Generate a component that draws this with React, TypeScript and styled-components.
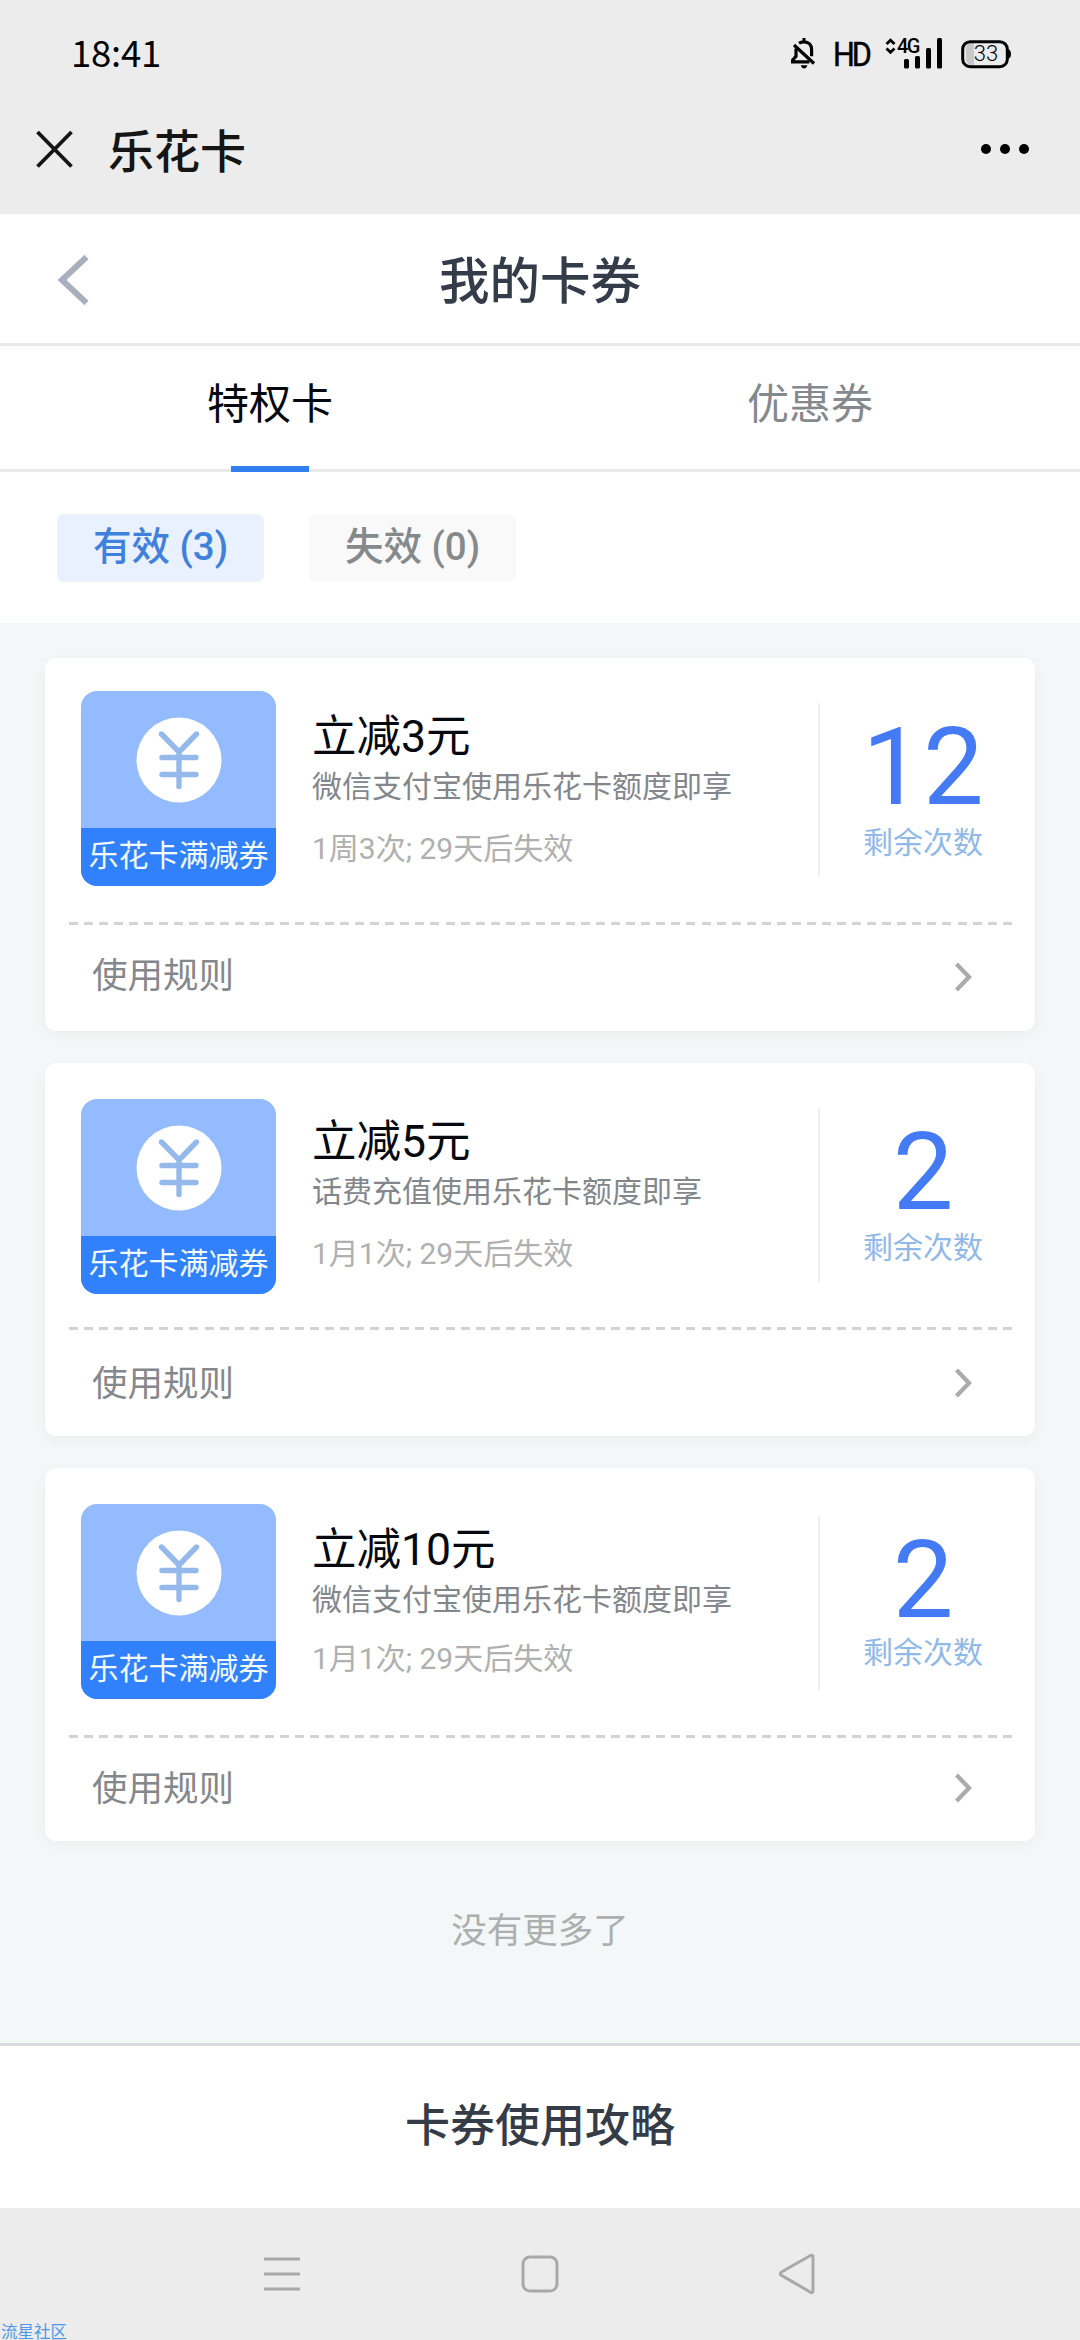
import React from "react";
import styled, { createGlobalStyle } from "styled-components";

const GlobalStyle = createGlobalStyle`
  * { box-sizing: border-box; }
  html, body { margin: 0; padding: 0; }
  body { font-family: Roboto, "Noto Sans CJK SC", sans-serif; background: #ececec; }
`;

const Screen = styled.div`
  position: relative;
  display: flex;
  flex-direction: column;
  width: 1080px;
  height: 2340px;
  overflow: hidden;
  background: #f4f7f7;
`;

const StatusBar = styled.header`
  display: flex;
  align-items: center;
  height: 108px;
  padding: 0 68px 0 71px;
  background: #ececec;
  color: #000;
`;

const Clock = styled.span`
  flex: 1;
  padding-bottom: 5px;
  font-family: "Noto Sans CJK SC", sans-serif;
  font-size: 36.5px;
  line-height: 50px;
  letter-spacing: -0.2px;
`;

const HdLabel = styled.span`
  width: 38px;
  margin: 0 14px 0 16px;
  font-size: 34px;
  line-height: 40px;
  letter-spacing: -3.4px;
  -webkit-text-stroke: 0.5px #000;
  transform: scaleX(0.9);
  transform-origin: left;
`;

const Signal = styled.div`
  position: relative;
  width: 58px;
  height: 32px;
  margin-right: 18px;
`;

const NetworkLabel = styled.span`
  position: absolute;
  left: 12px;
  top: 0;
  font-size: 20px;
  line-height: 17px;
  font-weight: 500;
  letter-spacing: -1.5px;
`;

const Battery = styled.div`
  position: relative;
  width: 51px;
  height: 30px;
`;

const BatteryLabel = styled.span`
  position: absolute;
  left: 0;
  top: 0;
  width: 51px;
  font-size: 22px;
  font-weight: 300;
  line-height: 29px;
  text-align: center;
  text-indent: -1px;
`;

const AppBar = styled.div`
  display: flex;
  align-items: center;
  height: 106px;
  padding: 0 50px 24px 36px;
  background: #ececec;
`;

const AppName = styled.span`
  flex: 1;
  padding: 6px 0 0 35px;
  font-size: 46px;
  font-weight: 500;
  line-height: 64px;
  color: #151515;
`;

const PageHeader = styled.div`
  display: grid;
  grid-template-columns: 100px 1fr 100px;
  align-items: center;
  height: 132px;
  border-bottom: 3px solid #e9e9e9;
  background: #fff;
`;

const BackButton = styled.button`
  display: flex;
  padding: 2px 0 0 57px;
  border: 0;
  background: none;
`;

const PageTitle = styled.h1`
  margin: 0;
  padding-top: 6px;
  font-size: 50.5px;
  font-weight: 500;
  line-height: 70px;
  text-align: center;
  color: #353c49;
`;

const Tabs = styled.div`
  display: flex;
  height: 126px;
  border-bottom: 3px solid #e9e9e9;
  background: #fff;
`;

const Tab = styled.div<{ $active?: boolean }>`
  position: relative;
  flex: 1;
  padding-top: 29px;
  font-size: 42px;
  line-height: 60px;
  text-align: center;
  color: ${(p) => (p.$active ? "#05080f" : "#84898e")};

  &::after {
    content: "";
    position: absolute;
    display: ${(p) => (p.$active ? "block" : "none")};
    left: 231px;
    bottom: -3px;
    width: 78px;
    height: 6px;
    background: #317ff0;
  }
`;

const Filters = styled.div`
  display: flex;
  gap: 45px;
  height: 151px;
  padding: 42px 57px 0;
  background: #fff;
`;

const Filter = styled.div<{ $active?: boolean }>`
  width: 207px;
  height: 68px;
  border-radius: 7px;
  font-size: 38.5px;
  font-weight: 500;
  line-height: 66px;
  text-align: center;
  background: ${(p) => (p.$active ? "#e9f1fe" : "#f9f9f9")};
  color: ${(p) => (p.$active ? "#3f80dc" : "#85898c")};
`;

const CardList = styled.main`
  display: flex;
  flex-direction: column;
  gap: 32px;
  padding: 35px 45px 0;
`;

const Card = styled.section`
  height: 373px;
  border-radius: 11px;
  background: #fff;
  box-shadow: 0 4px 12px rgba(90, 80, 80, 0.05);
`;

const CardTop = styled.div<{ $height: number }>`
  display: flex;
  height: ${(p) => p.$height}px;
`;

const Badge = styled.div<{ $top: number }>`
  display: flex;
  flex-direction: column;
  width: 195px;
  height: 195px;
  margin: ${(p) => p.$top}px 0 0 36px;
  border-radius: 16px;
  overflow: hidden;
  background: #94bbfd;
`;

const BadgeIcon = styled.div`
  display: flex;
  justify-content: center;
  height: 137px;
  padding-top: 26px;
`;

const BadgeLabel = styled.div`
  height: 58px;
  background: #3180fc;
  color: #f2fbff;
  font-size: 30px;
  line-height: 55px;
  text-align: center;
  white-space: nowrap;
`;

const Info = styled.div<{ $top: number }>`
  flex: 1;
  padding: ${(p) => p.$top}px 0 0 36px;
`;

const OfferTitle = styled.h2`
  margin: 0;
  font-size: 44.5px;
  font-weight: 400;
  line-height: 60px;
  color: #06090f;
`;

const OfferText = styled.p`
  margin: 0;
  font-size: 30px;
  line-height: 39px;
  white-space: nowrap;
  color: #83878c;
`;

const OfferMeta = styled.p<{ $gap: number }>`
  margin: ${(p) => p.$gap}px 0 0;
  font-size: 30px;
  line-height: 40px;
  color: #b0b0b0;
`;

const Count = styled.div<{ $top: number }>`
  width: 217px;
  height: 174px;
  margin-top: ${(p) => p.$top}px;
  padding: 14px 9px 0 0;
  border-left: 2px solid #eeeff0;
  text-align: center;
`;

const CountValue = styled.div`
  font-size: 108px;
  line-height: 100px;
  color: #447bf5;
`;

const CountLabel = styled.div<{ $gap: number }>`
  margin-top: ${(p) => p.$gap}px;
  font-size: 30px;
  line-height: 40px;
  color: #8fb9e8;
`;

const Perforation = styled.div`
  height: 3px;
  margin: 0 22px 0 24px;
  background: repeating-linear-gradient(90deg, #d3d3d3 0 9px, transparent 9px 15.06px);
`;

const RuleRow = styled.div<{ $top: number }>`
  display: flex;
  justify-content: space-between;
  align-items: flex-start;
  height: 80px;
  padding: 0 63px 0 47px;
  font-size: 35.5px;
  color: #84888d;

  span {
    padding-top: ${(p) => p.$top}px;
    line-height: 50px;
  }
`;

const RuleArrow = styled.svg<{ $top: number }>`
  margin-top: ${(p) => p.$top}px;
`;

const EndNote = styled.p`
  flex: 1;
  margin: 0;
  padding-top: 65px;
  font-size: 35.5px;
  line-height: 50px;
  text-align: center;
  color: #acafaf;
`;

const GuideBar = styled.div`
  height: 165px;
  padding-top: 49px;
  border-top: 3px solid #d7dcdf;
  background: #fff;
  font-size: 45px;
  font-weight: 500;
  line-height: 64px;
  text-align: center;
  color: #363c47;
`;

const SystemNav = styled.nav`
  display: flex;
  justify-content: space-between;
  height: 132px;
  padding: 44px 264px 0 263px;
  background: #ececec;
`;

const Watermark = styled.span`
  position: absolute;
  left: 1px;
  bottom: 0;
  font-family: "Noto Sans CJK SC", sans-serif;
  font-size: 16.5px;
  line-height: 17px;
  color: #4b9ae8;
`;

interface Coupon {
  title: string;
  text: string;
  meta: string;
  count: number;
  badgeTop: number;
  infoTop: number;
  metaGap: number;
  countTop: number;
  labelGap: number;
  topHeight: number;
  ruleTop: number;
  arrowTop: number;
}

const coupons: Coupon[] = [
  {
    title: "立减3元", text: "微信支付宝使用乐花卡额度即享", meta: "1周3次; 29天后失效", count: 12,
    badgeTop: 33, infoTop: 49, metaGap: 23, countTop: 45, labelGap: 6, topHeight: 264, ruleTop: 26, arrowTop: 37,
  },
  {
    title: "立减5元", text: "话费充值使用乐花卡额度即享", meta: "1月1次; 29天后失效", count: 2,
    badgeTop: 36, infoTop: 49, metaGap: 23, countTop: 45, labelGap: 6, topHeight: 264, ruleTop: 29, arrowTop: 38,
  },
  {
    title: "立减10元", text: "微信支付宝使用乐花卡额度即享", meta: "1月1次; 29天后失效", count: 2,
    badgeTop: 36, infoTop: 52, metaGap: 20, countTop: 48, labelGap: 3, topHeight: 267, ruleTop: 26, arrowTop: 35,
  },
];

function MutedBell() {
  return (
    <svg width="26" height="32" viewBox="0 0 26 32" fill="none" stroke="#000" strokeWidth="3.2">
      <path d="M3 7l20 18.5" />
      <path d="M8 5.2c1.4-1 3-1.4 5-1.4 4.6 0 7.6 3 7.6 7.6v6.8M5 10.5v7.8l-3.6 4v1.6h17" />
      <path d="M13 0v4" strokeWidth="3" />
      <path d="M9.8 27.2h6.6c-.4 2-1.6 3.2-3.3 3.2s-2.9-1.200-3.3-3.200z" fill="#000" stroke="none" />
    </svg>
  );
}

function CouponCard({ item }: { item: Coupon }) {
  return (
    <Card>
      <CardTop $height={item.topHeight}>
        <Badge $top={item.badgeTop}>
          <BadgeIcon>
            <svg width="86" height="86" viewBox="0 0 86 86">
              <circle cx="43" cy="43" r="42.500" fill="#fff" />
              <path
                d="M25.500 17L43 35l17.500-18M43 35v34.500M26 40.500h34M26 57.500h34"
                fill="none" stroke="#96b9ec" strokeWidth="5.400" strokeLinecap="round" strokeLinejoin="round"
              />
            </svg>
          </BadgeIcon>
          <BadgeLabel>乐花卡满减券</BadgeLabel>
        </Badge>
        <Info $top={item.infoTop}>
          <OfferTitle>{item.title}</OfferTitle>
          <OfferText>{item.text}</OfferText>
          <OfferMeta $gap={item.metaGap}>{item.meta}</OfferMeta>
        </Info>
        <Count $top={item.countTop}>
          <CountValue>{item.count}</CountValue>
          <CountLabel $gap={item.labelGap}>剩余次数</CountLabel>
        </Count>
      </CardTop>
      <Perforation />
      <RuleRow $top={item.ruleTop}>
        <span>使用规则</span>
        <RuleArrow $top={item.arrowTop} width="18" height="30" viewBox="0 0 18 30">
          <path d="M2.500 2l12.500 13L2.500 28" fill="none" stroke="#ababab" strokeWidth="4.300" />
        </RuleArrow>
      </RuleRow>
    </Card>
  );
}

export default function App() {
  return (
    <>
      <GlobalStyle />
      <Screen>
        <StatusBar>
          <Clock>18:41</Clock>
          <MutedBell />
          <HdLabel>HD</HdLabel>
          <Signal>
            <svg width="58" height="32" viewBox="0 0 58 32">
              <path d="M1.500 6l4-3.800 4 3.800M1.500 10.500l4 3.800 4-3.800" fill="none" stroke="#000" strokeWidth="2.800" />
              <g fill="#000">
                <rect x="19" y="21" width="5" height="9.500" rx="1.500" />
                <rect x="30" y="18" width="5" height="12.500" rx="1.500" />
                <rect x="41" y="10" width="5" height="20.500" rx="1.500" />
                <rect x="52" y="0" width="5" height="30.500" rx="1.500" />
              </g>
            </svg>
            <NetworkLabel>4G</NetworkLabel>
          </Signal>
          <Battery>
            <svg width="51" height="30" viewBox="0 0 51 30">
              <path d="M13 4v22h-3q-5-1-5-6V10q0-5 5-6z" fill="#c8c8c8" />
              <rect x="1.700" y="2.700" width="44.600" height="25" rx="7.500" fill="none" stroke="#000" strokeWidth="3" />
              <path d="M47 10q3 1 3 5t-3 5z" fill="#000" />
            </svg>
            <BatteryLabel>33</BatteryLabel>
          </Battery>
        </StatusBar>
        <AppBar>
          <svg width="37" height="38" viewBox="0 0 37 38">
            <path d="M1.500 2l34 34.500M35.500 2l-34 34.500" stroke="#151515" strokeWidth="3.800" />
          </svg>
          <AppName>乐花卡</AppName>
          <svg width="50" height="12" viewBox="0 0 50 12">
            <circle cx="6" cy="6" r="5" />
            <circle cx="25" cy="6" r="5" />
            <circle cx="44" cy="6" r="5" />
          </svg>
        </AppBar>
        <PageHeader>
          <BackButton aria-label="返回">
            <svg width="33" height="50" viewBox="0 0 33 50">
              <path d="M29.500 2L5 25l24.500 23" fill="none" stroke="#a8b0be" strokeWidth="6" />
            </svg>
          </BackButton>
          <PageTitle>我的卡券</PageTitle>
        </PageHeader>
        <Tabs>
          <Tab $active>特权卡</Tab>
          <Tab>优惠券</Tab>
        </Tabs>
        <Filters>
          <Filter $active>有效 (3)</Filter>
          <Filter>失效 (0)</Filter>
        </Filters>
        <CardList>
          {coupons.map((item) => (
            <CouponCard key={item.title} item={item} />
          ))}
        </CardList>
        <EndNote>没有更多了</EndNote>
        <GuideBar>卡券使用攻略</GuideBar>
        <SystemNav>
          <svg width="38" height="44" viewBox="0 0 38 44" stroke="#a9a9a9" strokeWidth="3">
            <path d="M1 7h36M1 22h36M1 37h36" />
          </svg>
          <svg width="38" height="44" viewBox="0 0 38 44" fill="none" stroke="#a9a9a9" strokeWidth="3">
            <rect x="2" y="5" width="34" height="34" rx="7" />
          </svg>
          <svg width="38" height="44" viewBox="0 0 38 44" fill="none" stroke="#a9a9a9" strokeWidth="3">
            <path d="M32.500 3.500L3.500 20q-2.500 1.700 0 3.400l29 16.800q2.500 1.200 2.500-1.500V5q0-2.700-2.500-1.500z" />
          </svg>
        </SystemNav>
        <Watermark>流星社区</Watermark>
      </Screen>
    </>
  );
}
